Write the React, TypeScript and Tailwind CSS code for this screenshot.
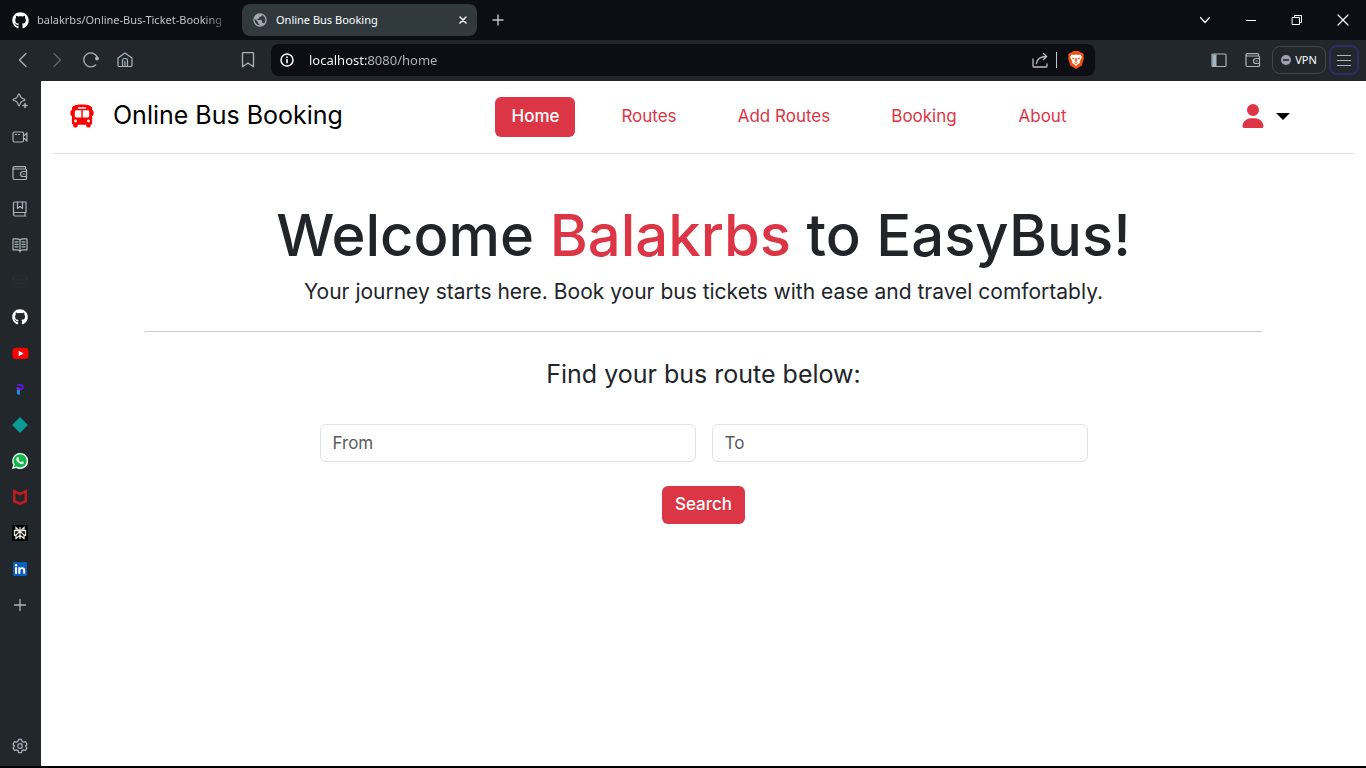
import type { ReactNode } from "react";
import { FaBus, FaGithub, FaUser, FaYoutube } from "react-icons/fa6";
import { MdPublic } from "react-icons/md";

type IconProps = { children: ReactNode; className?: string };

function Line({ children, className = "size-4" }: IconProps) {
  return (
    <svg viewBox="0 0 16 16" fill="none" stroke="currentColor" strokeWidth="1.2" strokeLinecap="round" strokeLinejoin="round" className={className} aria-hidden="true">
      {children}
    </svg>
  );
}

function WalletIcon() {
  return (
    <Line>
      <path d="M1 2.700v10.300a1.500 1.500 0 0 0 1.500 1.500h11a1 1 0 0 0 1-1V5a1 1 0 0 0-1-1H2.300a1.200 1.200 0 0 1 0-2.400h10.500a.8.8 0 0 1 .8.8V4" />
      <path d="M14.500 6.500H11a2.500 2.500 0 0 0 0 5h3.500M11.300 9h1" />
    </Line>
  );
}

const sideItems: { label: string; icon: ReactNode }[] = [
  {
    label: "Assistant",
    icon: (
      <Line>
        <path d="M7 .8c.7 0 .9.700 1.200 2.100.400 1.800.900 2.300 2.700 2.700 1.400.300 2.100.500 2.100 1.200s-.700.900-2.100 1.200c-1.800.400-2.300.900-2.700 2.700-.300 1.400-.500 2.100-1.200 2.100s-.900-.700-1.200-2.100c-.400-1.800-.900-2.300-2.700-2.700C1.700 7.700 1 7.500 1 6.800s.700-.900 2.100-1.200c1.800-.400 2.300-.900 2.700-2.700C6.100 1.500 6.300.8 7 .8z" />
        <path d="M13 10.500v4M11 12.500h4" strokeWidth="1.500" />
      </Line>
    ),
  },
  {
    label: "Talk",
    icon: (
      <Line>
        <rect x="1" y="3" width="10.500" height="10" rx="1.500" />
        <path d="M11.500 6.500 12.500 6.500 14.900 3.800v8.400L12.500 9.500h-1M3.500 5.500h1M6.500 5.500h1" />
      </Line>
    ),
  },
  { label: "Wallet", icon: <WalletIcon /> },
  {
    label: "Bookmarks",
    icon: (
      <Line>
        <path d="M14 11.500V1H3a1.500 1.500 0 0 0-1.500 1.500v11A1.500 1.500 0 0 0 3 15h11M14 11.500H3a1.500 1.500 0 0 0-1.300 1M13 11.500V15" />
        <path d="M5.500 1v6.500L8 5.500l2.500 2V1" />
      </Line>
    ),
  },
  {
    label: "Reading list",
    icon: (
      <Line>
        <path d="M8 3C7 2 6 1.800 4.500 1.800H1v11h4c1.500 0 2.300.400 3 1.400.700-1 1.500-1.400 3-1.400h4v-11h-3.500C10 1.800 9 2 8 3zM8 3v12M3 4.800h3M3 7.300h3M3 9.800h3M10 4.800h3M10 7.300h3M10 9.800h3" />
      </Line>
    ),
  },
  {
    label: "Panel",
    icon: (
      <Line className="size-4 text-[#2b2f33]">
        <rect x="1" y="3" width="14" height="11" rx="1" />
        <path d="M1 7h14M4 10.500h8" />
      </Line>
    ),
  },
  { label: "GitHub", icon: <FaGithub className="size-4 text-white" /> },
  {
    label: "YouTube",
    icon: (
      <span className="relative">
        <FaYoutube className="size-[17px] text-[#fe0000]" />
        <svg viewBox="0 0 17 17" className="absolute inset-0 size-[17px]" aria-hidden="true">
          <path d="M6.700 5.700v5.600l5-2.800z" fill="#fff" />
        </svg>
      </span>
    ),
  },
  {
    label: "Projects",
    icon: (
      <svg viewBox="0 0 16 16" className="size-4" aria-hidden="true">
        <path d="M4.300 3.800C6 2.300 11.800 1.800 11.800 6c0 3-2.800 3.700-4 3.600V7.500c1.400.100 2-.600 1.800-1.400-.400-1.500-3-1-5.300-2.300z" fill="#5b18d8" />
        <path d="M4.200 6.500c1.600-.400 3.200.100 3.600 1v2.900L5.300 8.500z" fill="#8426e8" />
        <path d="M4.900 9.400c1.500-.600 2.800-.200 2.900.300v4c-1.200.5-2.900-.200-2.900-1.700z" fill="#1597e5" />
      </svg>
    ),
  },
  {
    label: "Diamond",
    icon: (
      <svg viewBox="0 0 16 16" className="size-4" aria-hidden="true">
        <path d="M8 1 15 8l-7 7-7-7z" fill="#0a9c97" stroke="#0a9c97" strokeWidth="1.300" strokeLinejoin="round" />
      </svg>
    ),
  },
  {
    label: "WhatsApp",
    icon: (
      <svg viewBox="0 0 16 16" className="size-4" aria-hidden="true">
        <path d="M0 16l1.200-4.200A8 8 0 1 1 4.200 14.900z" fill="#fff" />
        <path d="M1.800 14.200l.8-2.700a6.600 6.600 0 1 1 2.100 2z" fill="#12b74a" />
        <path d="M5.400 4.200c.500-.300.900-.200 1.100.300l.500 1.200c.100.400-.5.900-.6 1.100.5 1.100 1.400 1.900 2.600 2.400.300-.100.700-.9 1-.9l1.500.7c.4.200.3.500.2.900-.300.900-1.500 1.400-2.300 1.200-2.300-.5-4-2-4.900-4-.4-1-.1-2.300.9-2.900z" fill="#fff" />
      </svg>
    ),
  },
  {
    label: "McAfee",
    icon: (
      <svg viewBox="0 0 16 16" className="size-4" fill="none" aria-hidden="true">
        <path d="M2.200 2.200 8 5l5.800-2.800v9.900L8 14.700l-5.800-2.600z" stroke="#c31b1e" strokeWidth="2.500" />
      </svg>
    ),
  },
  {
    label: "Perplexity",
    icon: (
      <svg viewBox="0 0 16 16" className="size-4" fill="none" aria-hidden="true">
        <rect width="16" height="16" rx="1" fill="#000" />
        <path d="M8 2v12M4 2.500v3.200h8V2.500L8 6.500zM4 5.700H2.500v4.600H4M12 5.700h1.500v4.600H12M8 6 4 10v3.500l4-3.300 4 3.300V10z" stroke="#eeeade" strokeWidth="1.200" />
      </svg>
    ),
  },
  {
    label: "LinkedIn",
    icon: (
      <svg viewBox="0 0 16 16" className="size-4" aria-hidden="true">
        <rect x="1" y="1" width="14" height="14" rx="1" fill="#0a5fb8" />
        <path d="M3 6.300h2v6.500H3zM6.300 6.300h2v.9c1-1.600 4.900-1.500 4.900 1.800v3.800h-2V9.600c0-2.200-2.900-2-2.900 0v3.200h-2z" fill="#fff" />
        <circle cx="4" cy="4.200" r="1.200" fill="#fff" />
      </svg>
    ),
  },
  { label: "Add panel", icon: <Line><path d="M8 2.500v11M2.500 8h11" strokeWidth="1.300" /></Line> },
];

const links = [
  { label: "Home", width: "w-20" },
  { label: "Routes", width: "w-[87px]" },
  { label: "Add Routes", width: "w-[123px]" },
  { label: "Booking", width: "w-[97px]" },
  { label: "About", width: "w-20" },
];

function IconButton({ label, className = "", children }: { label: string; className?: string; children: ReactNode }) {
  return (
    <button type="button" aria-label={label} className={`flex shrink-0 items-center justify-center ${className}`}>
      {children}
    </button>
  );
}

function TabStrip() {
  return (
    <div className="flex h-10 items-center bg-[#0d0e13] text-[11px]">
      <div className="flex w-[242px] shrink-0 items-center gap-2 px-3">
        <FaGithub className="size-[17px] shrink-0 text-white" />
        <span className="whitespace-nowrap text-[#c1c2c5] [mask-image:linear-gradient(to_right,black_90%,#0006)]">balakrbs/Online-Bus-Ticket-Booking</span>
      </div>
      <div className="flex h-8 w-[235px] shrink-0 items-center gap-2 rounded-lg bg-[#303a3e] pr-2 pl-2.5 text-white">
        <MdPublic className="size-4 shrink-0 text-[#a4a8b0]" />
        <span className="flex-1">Online Bus Booking</span>
        <IconButton label="Close tab" className="size-3">
          <Line className="size-3"><path d="m4 4 8 8M12 4l-8 8" strokeWidth="2" /></Line>
        </IconButton>
      </div>
      <IconButton label="New tab" className="size-[42px] text-[#c3c5c9]">
        <Line><path d="M8 3v10M3 8h10" strokeWidth="1.400" /></Line>
      </IconButton>
      <div className="ml-auto flex text-white">
        <IconButton label="Search tabs" className="h-10 w-[46px]">
          <Line><path d="m3.500 5.500 4.500 5 4.500-5" /></Line>
        </IconButton>
        <IconButton label="Minimise" className="h-10 w-[46px]">
          <Line><path d="M3 8.500h10" strokeLinecap="butt" strokeWidth="1" /></Line>
        </IconButton>
        <IconButton label="Restore" className="h-10 w-[46px]">
          <Line><path d="M3.500 5.500h7v7h-7zM5.500 5.500v-2h7v7h-2" strokeLinejoin="miter" strokeWidth="1" /></Line>
        </IconButton>
        <IconButton label="Close" className="h-10 w-[46px]">
          <Line><path d="m3 3 10 10M13 3 3 13" /></Line>
        </IconButton>
      </div>
    </div>
  );
}

function Toolbar() {
  return (
    <div className="flex h-10 items-center bg-[#22272b] text-[#a7b5be]">
      <div className="flex w-[271px] shrink-0 items-center pl-1.5">
        <IconButton label="Back" className="h-8 w-[34px]">
          <Line><path d="M11 1.500 4.500 8l6.500 6.500" strokeWidth="1.300" /></Line>
        </IconButton>
        <IconButton label="Forward" className="h-8 w-[34px] text-[#5d666c]">
          <Line><path d="M5 1.500 11.500 8 5 14.500" strokeWidth="1.300" /></Line>
        </IconButton>
        <IconButton label="Reload" className="h-8 w-[34px]">
          <Line>
            <path d="M12.600 13A7 7 0 1 1 14 4.600" strokeWidth="1.300" />
            <circle cx="14" cy="6.500" r="1.900" fill="currentColor" stroke="none" />
          </Line>
        </IconButton>
        <IconButton label="Home page" className="h-8 w-[34px]">
          <Line>
            <path d="M1 6 8 1l7 5v7.500a1 1 0 0 1-1 1H2a1 1 0 0 1-1-1zM5.500 14.500V8.500a2 2 0 0 1 2-2h1a2 2 0 0 1 2 2v6M8 9.500v5" />
          </Line>
        </IconButton>
        <IconButton label="Bookmark" className="mr-1.5 ml-auto h-8 w-[34px]">
          <Line><path d="M2.500 1.500a1 1 0 0 1 1-1h9a1 1 0 0 1 1 1v13.300L8 11l-5.500 3.800z" strokeWidth="1.300" /></Line>
        </IconButton>
      </div>
      <div className="flex h-8 w-[824px] min-w-0 items-center rounded-lg bg-[#0d0e13] px-2">
        <svg viewBox="0 0 16 16" className="size-4 shrink-0" fill="none" stroke="#fff" aria-hidden="true">
          <circle cx="8" cy="8" r="6" strokeWidth="1.500" />
          <path d="M8 7v4.200M8 4.600v1.400" strokeWidth="1.600" />
        </svg>
        <input
          aria-label="Address"
          type="text"
          defaultValue="localhost:8080/home"
          className="ml-3.5 h-6 min-w-0 flex-1 bg-[linear-gradient(to_right,white_60px,#b7b8bb_60px)] bg-clip-text text-[13px] text-transparent outline-none"
        />
        <IconButton label="Share" className="size-4 text-[#b9bcc1]">
          <Line><path d="M1 7v7a1 1 0 0 0 1 1h12a1 1 0 0 0 1-1v-2M4.500 11.500c.5-4 3.500-7 10-7M11.500 1.500l3.200 3-3.200 3" strokeWidth="1.300" /></Line>
        </IconButton>
        <span className="mx-2 h-4 w-px bg-[#c4c5c7]" />
        <IconButton label="Brave Shields" className="mx-0.5 size-[18px]">
          <svg viewBox="0 0 18 18" className="size-[18px]" aria-hidden="true">
            <path d="M6 0h6l1.600 1.700 1.400-.2L17 4l-.6 1.600.5 1.500-2.100 7.400L9 18l-5.800-3.500L1.100 7.100l.5-1.500L1 4l2-2.500 1.400.2z" fill="#f1520f" />
            <path d="M4.500 3.500 7 4l2-.4 2 .4 2.500-.5L15 6l-2.200 4.200.3 1.500-2.300 1.500L9 15l-1.800-1.800-2.300-1.500.3-1.500L3 6z" fill="#fff" />
            <path d="m4.700 6.500 3 .9-.6 1.100-1.600-.6zM13.300 6.500l-3 .9.600 1.100 1.600-.6zM8.400 7h1.200l.3 3L9 11.200 8.100 10zM6.500 11l2.500 1 2.500-1-2.500 2.200z" fill="#f1520f" />
          </svg>
        </IconButton>
      </div>
      <div className="ml-auto flex items-center pr-[7px]">
        <IconButton label="Sidebar" className="h-8 w-[34px]">
          <Line><rect x="1" y="2" width="14" height="12.500" rx="1" /><path d="M1.500 2.500h4v12h-4z" fill="currentColor" stroke="none" /></Line>
        </IconButton>
        <IconButton label="Wallet" className="h-8 w-[34px]"><WalletIcon /></IconButton>
        <button type="button" className="ml-0.5 flex h-7 w-[54px] items-center justify-center gap-1 rounded-lg border border-[#42484e] text-[11px] text-white">
          <span className="flex size-2.5 items-center justify-center rounded-full bg-[#a0a1b2]"><span className="h-0.5 w-1.5 bg-[#3b3e48]" /></span>
          VPN
        </button>
        <IconButton label="Menu" className="ml-[3px] size-[30px] rounded-lg border-2 border-[#302c67]">
          <Line><path d="M1.500 3.500h13M1.500 8.500h13M1.500 13.500h13" /></Line>
        </IconButton>
      </div>
    </div>
  );
}

function SideBar() {
  return (
    <aside className="flex w-[41px] shrink-0 flex-col bg-[#22272b] pt-[3px] pb-1 text-[#a7b5be]">
      {sideItems.map((item) => (
        <IconButton key={item.label} label={item.label} className="h-9 w-10">{item.icon}</IconButton>
      ))}
      <IconButton label="Settings" className="mt-auto h-8 w-10">
        <Line>
          <path d="M6.600 1.400h2.800l.6 2 1.500.8 2.100-.5 1.400 2.500L13.600 8l1.400 1.800-1.400 2.500-2.100-.5-1.500.8-.6 2H6.600l-.6-2-1.500-.8-2.100.5L1 9.800 2.400 8 1 6.200l1.400-2.500 2.100.5L6 3.400z" strokeWidth="1.300" />
          <circle cx="8" cy="8" r="2.300" />
        </Line>
      </IconButton>
    </aside>
  );
}

function Site() {
  return (
    <div className="mt-px min-w-0 flex-1 bg-white px-3 font-[Inter,sans-serif] text-[17px] text-[#212529]">
      <header className="flex h-[73px] items-center justify-between border-b border-[#dee2e6] pr-16 pb-0.5 pl-4">
        <a href="#home" className="flex items-center gap-[18px] text-[25px] whitespace-nowrap text-black">
          <FaBus className="size-[26px] text-[#ff0000]" />
          Online Bus Booking
        </a>
        <nav className="flex gap-[30px] pt-px pr-1.5">
          {links.map((link, i) => (
            <a
              key={link.label}
              href={`#${link.label.toLowerCase().replace(" ", "-")}`}
              className={`flex h-10 items-center justify-center rounded-md whitespace-nowrap ${link.width} ${i === 0 ? "bg-[#dc3545] font-medium text-white" : "text-[#dc3545]"}`}
            >
              {link.label}
            </a>
          ))}
        </nav>
        <button type="button" aria-label="Account menu" className="flex items-center gap-[11px]">
          <FaUser className="size-6 text-[#dc3545]" />
          <svg viewBox="0 0 14 7" className="h-[7px] w-3.5" aria-hidden="true"><path d="M0 0h14L7 7z" fill="#000" /></svg>
        </button>
      </header>
      <main className="px-[92px] pt-12 text-center">
        <h1 className="text-[58px] leading-[67px] font-medium whitespace-nowrap">
          Welcome <span className="text-[#dc3545]">Balakrbs</span> to EasyBus!
        </h1>
        <p className="mt-2 text-[21px] leading-[30px]">Your journey starts here. Book your bus tickets with ease and travel comfortably.</p>
        <hr className="mt-6 border-[#c8c9ca]" />
        <h2 className="mt-6 text-[25px] leading-9">Find your bus route below:</h2>
        <form className="mx-auto mt-8 grid max-w-3xl grid-cols-2 gap-x-4 gap-y-6" onSubmit={(e) => e.preventDefault()}>
          <input aria-label="From" placeholder="From" className="h-[38px] min-w-0 rounded-md border border-[#dee2e6] px-3 placeholder:text-[#595c5f]" />
          <input aria-label="To" placeholder="To" className="h-[38px] min-w-0 rounded-md border border-[#dee2e6] px-3 placeholder:text-[#595c5f]" />
          <button type="submit" className="col-span-2 h-[38px] w-[83px] justify-self-center rounded-md bg-[#dc3545] font-medium text-white">Search</button>
        </form>
      </main>
    </div>
  );
}

export default function App() {
  return (
    <div className="flex min-h-screen flex-col border-b-2 border-black bg-[#22272b] font-['Noto_Sans',sans-serif]">
      <TabStrip />
      <Toolbar />
      <div className="flex flex-1">
        <SideBar />
        <Site />
      </div>
    </div>
  );
}
